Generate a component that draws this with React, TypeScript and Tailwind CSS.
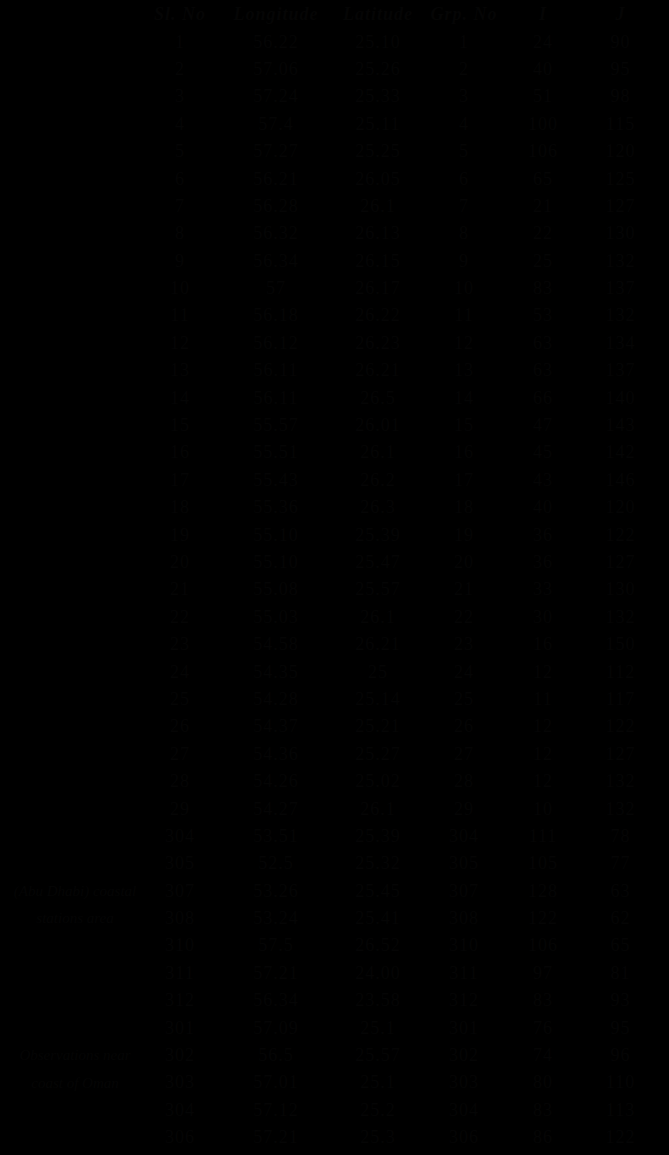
import React from "react";

const rows: [string, string, string, string, string, string, string][] = [
  ["", "1", "56.22", "25.10", "1", "24", "90"],
  ["", "2", "57.06", "25.26", "2", "40", "95"],
  ["", "3", "57.24", "25.33", "3", "51", "98"],
  ["", "4", "57.4", "25.11", "4", "100", "115"],
  ["", "5", "57.27", "25.25", "5", "106", "120"],
  ["", "6", "56.21", "26.05", "6", "65", "125"],
  ["", "7", "56.28", "26.1", "7", "21", "127"],
  ["", "8", "56.32", "26.13", "8", "22", "130"],
  ["", "9", "56.34", "26.15", "9", "25", "132"],
  ["", "10", "57", "26.17", "10", "83", "137"],
  ["", "11", "56.18", "26.22", "11", "53", "132"],
  ["", "12", "56.12", "26.23", "12", "63", "134"],
  ["", "13", "56.11", "26.21", "13", "63", "137"],
  ["", "14", "56.11", "26.5", "14", "66", "140"],
  ["", "15", "55.57", "26.01", "15", "47", "143"],
  ["", "16", "55.51", "26.1", "16", "45", "142"],
  ["", "17", "55.43", "26.2", "17", "43", "146"],
  ["", "18", "55.36", "26.3", "18", "40", "120"],
  ["", "19", "55.10", "25.39", "19", "36", "122"],
  ["", "20", "55.10", "25.47", "20", "36", "127"],
  ["", "21", "55.08", "25.57", "21", "33", "130"],
  ["", "22", "55.03", "26.1", "22", "30", "132"],
  ["", "23", "54.58", "26.21", "23", "16", "150"],
  ["", "24", "54.35", "25", "24", "12", "112"],
  ["", "25", "54.28", "25.14", "25", "11", "117"],
  ["", "26", "54.37", "25.21", "26", "12", "122"],
  ["", "27", "54.36", "25.27", "27", "12", "127"],
  ["", "28", "54.26", "25.02", "28", "12", "132"],
  ["", "29", "54.27", "26.1", "29", "10", "132"],
  ["", "304", "53.51", "25.39", "304", "111", "78"],
  ["", "305", "52.5", "25.32", "305", "105", "77"],
  ["(Abu Dhabi) coastal", "307", "53.26", "25.45", "307", "128", "63"],
  ["stations area", "308", "53.24", "25.41", "308", "122", "62"],
  ["", "310", "57.5", "26.52", "310", "106", "65"],
  ["", "311", "57.21", "24.00", "311", "97", "81"],
  ["", "312", "56.34", "23.58", "312", "83", "93"],
  ["", "301", "57.09", "25.1", "301", "76", "95"],
  ["Observations near", "302", "56.5", "25.57", "302", "74", "96"],
  ["coast of Oman", "303", "57.01", "25.1", "303", "80", "110"],
  ["", "304", "57.12", "25.2", "304", "83", "113"],
  ["", "306", "57.21", "25.3", "306", "86", "122"],
];

const headers = ["", "Sl. No", "Longitude", "Latitude", "Grp. No", "I", "J"];

export default function App() {
  return (
    <div
      className="w-[669px] h-[1155px] bg-black overflow-hidden pt-[1px] text-[#050505] text-[18px]"
      style={{ fontFamily: '"Liberation Serif", "Times New Roman", serif' }}
    >
      <div className="grid grid-cols-[150px_60px_132px_72px_100px_58px_97px]">
        {headers.map((h, i) => (
          <div
            key={"h" + i}
            className="h-[27.4px] flex items-center justify-center font-bold italic whitespace-nowrap tracking-[1px]"
          >
            {h}
          </div>
        ))}
        {rows.map((r, ri) =>
          r.map((c, ci) => (
            <div
              key={ri + "-" + ci}
              className={
                "h-[27.4px] flex items-center justify-center whitespace-nowrap" +
                (ci === 0 ? " italic text-[15px]" : " tracking-[1px]")
              }
            >
              {c}
            </div>
          ))
        )}
      </div>
    </div>
  );
}
